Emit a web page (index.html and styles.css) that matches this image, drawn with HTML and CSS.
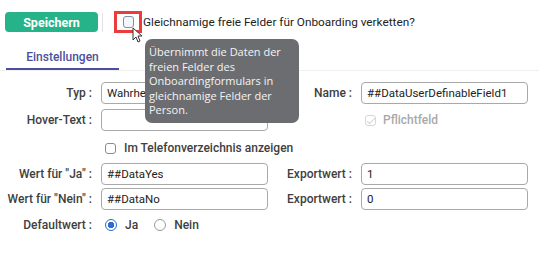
FILE: index.html
```html
<!DOCTYPE html>
<html lang="de">
<head>
    <meta charset="UTF-8">
    <meta name="viewport" content="width=device-width, initial-scale=1.0">
    <title>Feld bearbeiten</title>
    <link rel="stylesheet" href="styles.css">
</head>
<body>
    <div class="toolbar">
        <button class="btn-save">Speichern</button>
        <span class="sep"></span>
        <label class="merge">
            <span class="focus-box">
                <input type="checkbox" class="cb">
            </span>
            Gleichnamige freie Felder für Onboarding verketten?
        </label>
        <svg class="cursor" width="11" height="16" viewBox="0 0 11 16">
            <path d="M1 1 L1 13 L4 10 L6 15 L8 14 L6 9 L10 9 Z" fill="#fff" stroke="#333" stroke-width="1" stroke-linejoin="round"/>
        </svg>
        <div class="tooltip">Übernimmt die Daten der<br>freien Felder des<br>Onboardingformulars in<br>gleichnamige Felder der<br>Person.</div>
    </div>

    <div class="tabs">
        <div class="tab active">Einstellungen</div>
    </div>

    <form class="form">
        <div class="row">
            <label class="lbl">Typ :</label>
            <input type="text" class="inp" value="Wahrheitswert">
            <label class="lbl">Name :</label>
            <input type="text" class="inp" value="##DataUserDefinableField1">
        </div>
        <div class="row">
            <label class="lbl">Hover-Text :</label>
            <input type="text" class="inp">
            <span></span>
            <label class="check disabled"><input type="checkbox" class="cb" checked disabled> Pflichtfeld</label>
        </div>
        <div class="row row-check">
            <span></span>
            <label class="check wide"><input type="checkbox" class="cb"> Im Telefonverzeichnis anzeigen</label>
        </div>
        <div class="row row-ja">
            <label class="lbl">Wert für "Ja" :</label>
            <input type="text" class="inp" value="##DataYes">
            <label class="lbl">Exportwert :</label>
            <input type="text" class="inp" value="1">
        </div>
        <div class="row row-nein">
            <label class="lbl">Wert für "Nein" :</label>
            <input type="text" class="inp" value="##DataNo">
            <label class="lbl">Exportwert :</label>
            <input type="text" class="inp" value="0">
        </div>
        <div class="row row-radio">
            <label class="lbl">Defaultwert :</label>
            <div class="radios">
                <label class="check"><input type="radio" name="def" class="rd" checked> Ja</label>
                <label class="check"><input type="radio" name="def" class="rd"> Nein</label>
            </div>
        </div>
    </form>
</body>
</html>
```

FILE: styles.css
```css
body{
    margin: 0;
    font-family: "Roboto", "Liberation Sans", sans-serif;
    font-size: 12px;
    color: #2b2b2b;
    background: #fff;
}

.toolbar {
    position: relative;
    display: flex;
    align-items: center;
    padding: 12px 5px 0;
    height: 20px;
}

.btn-save {
    width: 93px;
    height: 20px;
    border: none;
    border-radius: 4px;
    background-color: #26b38a;
    color: #fff;
    font-family: "Roboto", sans-serif;
    font-weight: 700;
    font-size: 12.5px;
    padding: 0;
}

.sep {
    width: 1px;
    height: 19px;
    background: #e2e2e2;
    margin: 0 11px 0 4px;
}

.merge {
    display: flex;
    align-items: center;
    color: #222;
    font-size: 11.8px;
}

.focus-box {
    display: flex;
    align-items: center;
    justify-content: center;
    width: 22px;
    height: 16px;
    border: 3px solid #ec3b3b;
    margin-right: 1px;
}

.cb {
    appearance: none;
    width: 11px;
    height: 11px;
    margin: 0;
    border: 1px solid #8c8c8c;
    border-radius: 3px;
    background: #fff;
}

.focus-box .cb {
    width: 11px;
    height: 12px;
    border: 1.5px solid #7c8ea8;
    background: #f3f6fa;
}

.cursor {
    position: absolute;
    left: 132px;
    top: 27px;
}

.tooltip {
    position: absolute;
    left: 145px;
    top: 39px;
    width: 148px;
    padding: 6px 2px 5px 4px;
    background: #6c6d71;
    color: #f4f4f4;
    border-radius: 7px;
    font-family: "Open Sans", sans-serif;
    font-size: 11px;
    line-height: 14.6px;
    white-space: nowrap;
    z-index: 5;
}

.tabs {
    margin-top: 14px;
    border-bottom: 1px solid #efefef;
    padding-left: 6px;
}

.tab {
    width: 113px;
    height: 22px;
    line-height: 22px;
    text-align: center;
    font-weight: 500;
    color: #4b4f9c;
}

.tab.active {
    border-bottom: 2px solid #4b4f9c;
}

.form {
    padding-top: 11px;
}

.row {
    display: grid;
    grid-template-columns: 101px 167px 93px 167px;
    align-items: center;
    height: 22px;
    margin-bottom: 5px;
}

.lbl {
    text-align: right;
    padding-right: 9px;
    font-weight: 500;
    color: #404040;
    white-space: nowrap;
}

.inp {
    box-sizing: border-box;
    height: 22px;
    width: 100%;
    border: 1px solid #a9a9a9;
    border-radius: 4px;
    padding: 0 5px;
    font-family: "Roboto", sans-serif;
    font-size: 11.5px;
    color: #222;
    background: #fff;
}

.check {
    display: flex;
    align-items: center;
    gap: 8px;
    padding-left: 4px;
    font-weight: 500;
    color: #404040;
}

.check.wide {
    grid-column: 2 / 5;
}

.check.disabled {
    color: #a9a9a9;
    gap: 7px;
}

.check.disabled .cb {
    border-color: #d6d6d6;
    position: relative;
}

.check.disabled .cb:checked::after {
    content: "";
    position: absolute;
    left: 3px;
    top: 0px;
    width: 3px;
    height: 7px;
    border: solid #d2d2d2;
    border-width: 0 1.5px 1.5px 0;
    transform: rotate(45deg);
}

.row-check {
    margin: 6px 0 4px;
}

.row-ja {
    margin-bottom: 3px;
}

.row-nein {
    margin-bottom: 4px;
}

.radios {
    display: flex;
    gap: 12px;
    grid-column: 2 / 5;
}

.rd {
    appearance: none;
    width: 12px;
    height: 12px;
    margin: 0;
    border: 1px solid #9a9a9a;
    border-radius: 50%;
    background: #fff;
}

.rd:checked {
    border-color: #2a6ccf;
    background: radial-gradient(circle, #2a6ccf 0 3px, #fff 3.5px);
}
```
